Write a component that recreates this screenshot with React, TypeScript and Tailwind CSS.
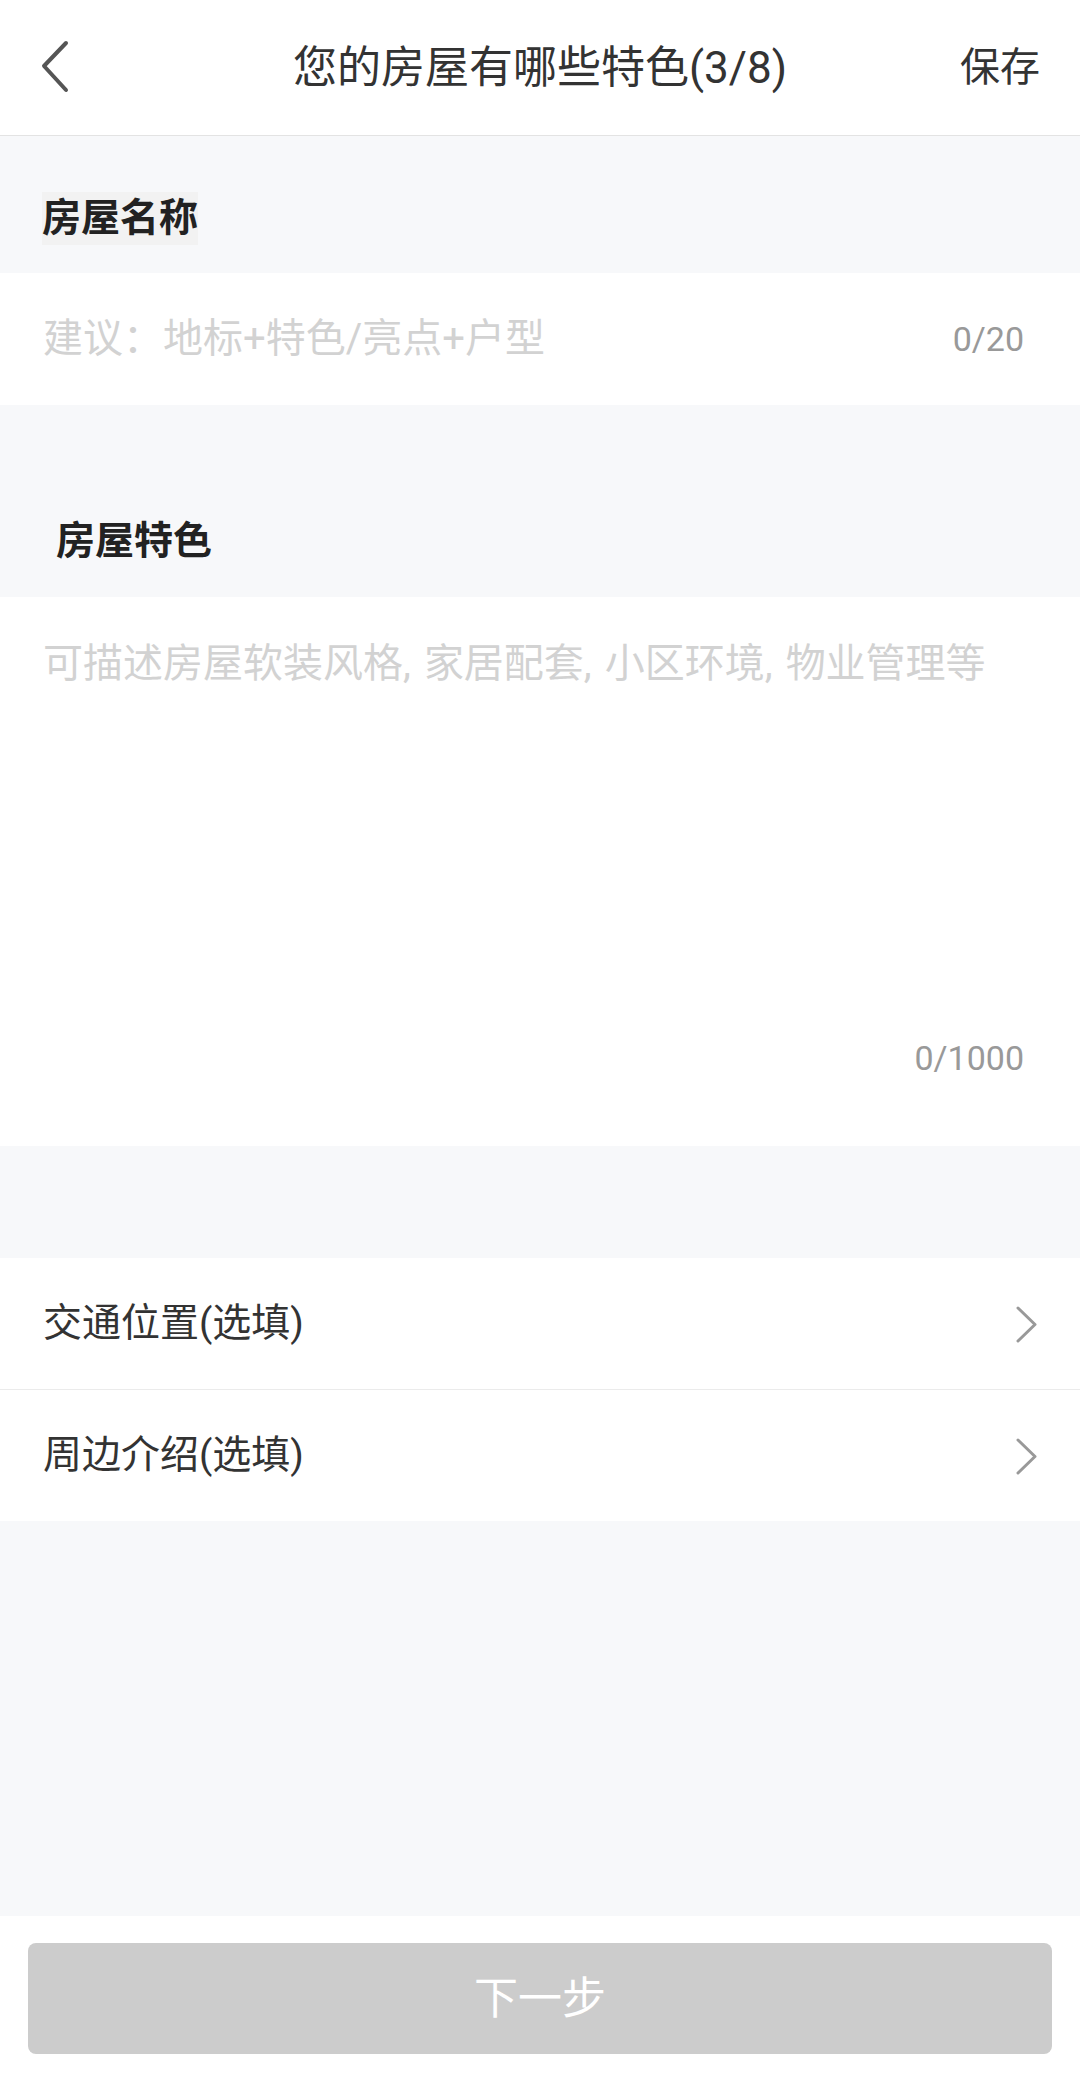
import React from "react";

const FONT = { fontFamily: "Roboto, 'Noto Sans CJK SC', sans-serif" };

function BackIcon() {
  return (
    <svg width="40" height="60" viewBox="0 0 40 60" className="block">
      <polyline points="26,14 4,37 26,61" transform="translate(0,-7)" fill="none" stroke="#555" strokeWidth="4" strokeLinecap="round" strokeLinejoin="round" />
    </svg>
  );
}

function Chevron() {
  return (
    <svg width="24" height="40" viewBox="0 0 24 40" className="block">
      <polyline points="4,4 21,20.5 4,37" fill="none" stroke="#999" strokeWidth="3" strokeLinecap="round" strokeLinejoin="round" />
    </svg>
  );
}

function Gap() {
  return <span className="inline-block w-[13px]" />;
}

export default function App() {
  return (
    <div style={FONT} className="w-[1080px] h-[2081px] flex flex-col bg-[#f7f8fa] text-[#333] overflow-hidden">
      {/* Header */}
      <div className="relative h-[136px] shrink-0 bg-white border-b border-[#e3e3e3] flex items-center justify-center">
        <div className="absolute left-[40px] top-[36px]">
          <BackIcon />
        </div>
        <div className="text-[44px] leading-none text-[#333]">您的房屋有哪些特色(3/8)</div>
        <div className="absolute right-[40px] top-0 h-full flex items-center text-[40px] text-[#333]">保存</div>
      </div>

      {/* Section 1 label */}
      <div className="h-[137px] shrink-0 pl-[42px] pt-[56px]">
        <span className="inline-block bg-[#f2f2f2] text-[39px] leading-[53px] font-bold text-[#222]">房屋名称</span>
      </div>

      {/* Input row */}
      <div className="h-[132px] shrink-0 bg-white flex items-center justify-between pl-[43px] pr-[56px]">
        <span className="text-[40px] text-[#d2d2d2]">建议：地标+特色/亮点+户型</span>
        <span className="text-[34px] text-[#999]">0/20</span>
      </div>

      {/* Section 2 label */}
      <div className="h-[192px] shrink-0 pl-[56px] pt-[110px]">
        <span className="block text-[39px] leading-[53px] font-bold text-[#222]">房屋特色</span>
      </div>

      {/* Textarea */}
      <div className="h-[549px] shrink-0 bg-white flex flex-col pl-[43px] pr-[56px] pt-[40px]">
        <div className="text-[40px] leading-[53px] text-[#d2d2d2] whitespace-nowrap">
          可描述房屋软装风格,<Gap />家居配套,<Gap />小区环境,<Gap />物业管理等
        </div>
        <div className="mt-[348px] text-right text-[34px] leading-[40px] text-[#999]">0/1000</div>
      </div>

      <div className="h-[112px] shrink-0" />

      {/* Rows */}
      <div className="bg-white shrink-0">
        <div className="h-[132px] flex items-center justify-between pl-[43px] pr-[42px] border-b border-[#ebebeb]">
          <span className="text-[39px] text-[#333]">交通位置(选填)</span>
          <Chevron />
        </div>
        <div className="h-[131px] flex items-center justify-between pl-[43px] pr-[42px]">
          <span className="text-[39px] text-[#333]">周边介绍(选填)</span>
          <Chevron />
        </div>
      </div>

      <div className="flex-1" />

      {/* Footer */}
      <div className="h-[165px] shrink-0 bg-white px-[28px] pt-[27px]">
        <div className="h-[111px] rounded-[8px] bg-[#cccccc] flex items-center justify-center text-[44px] text-white">
          下一步
        </div>
      </div>
    </div>
  );
}
